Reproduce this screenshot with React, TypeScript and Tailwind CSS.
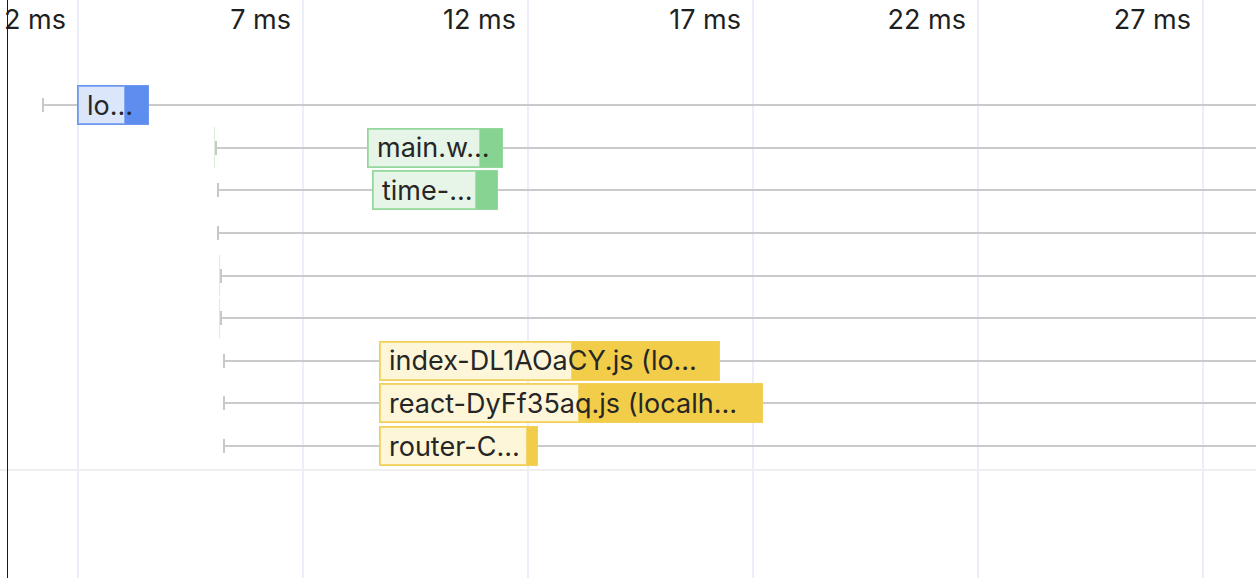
import React from 'react'

type Kind = 'blue' | 'green' | 'yellow'

interface Row {
  tick: number
  guide?: number
  bar?: { start: number; split: number; end: number; kind: Kind; label: string }
}

const ticks = ['7 ms', '12 ms', '17 ms', '22 ms', '27 ms']

const rows: Row[] = [
  { tick: 42, bar: { start: 77, split: 125, end: 149, kind: 'blue', label: 'lo…' } },
  { tick: 215, guide: 214, bar: { start: 367, split: 480, end: 503, kind: 'green', label: 'main.w…' } },
  { tick: 217, bar: { start: 372, split: 476, end: 498, kind: 'green', label: 'time-…' } },
  { tick: 217 },
  { tick: 220, guide: 219 },
  { tick: 220, guide: 219 },
  { tick: 223, bar: { start: 379, split: 572, end: 720, kind: 'yellow', label: 'index-DL1AOaCY.js (lo…' } },
  { tick: 223, bar: { start: 379, split: 579, end: 763, kind: 'yellow', label: 'react-DyFf35aq.js (localh…' } },
  { tick: 223, bar: { start: 379, split: 527, end: 538, kind: 'yellow', label: 'router-C…' } },
]

const barStyles: Record<Kind, { outer: string; inner: string }> = {
  blue: { outer: 'bg-[#5c8def] border-[#6c98f0]', inner: 'bg-[#dce6fa] border-[#86a9f2]' },
  green: { outer: 'bg-[#87d392] border-[#93d79c]', inner: 'bg-[#e6f5e7] border-[#a6deac]' },
  yellow: { outer: 'bg-[#f2cd4a] border-[#f2d05a]', inner: 'bg-[#fdf6d9] border-[#f4d76f]' },
}

function WaterfallRow({ row }: { row: Row }) {
  const bar = row.bar
  const s = bar ? barStyles[bar.kind] : null
  return (
    <div className="relative flex h-[42.625px] items-center" style={{ paddingLeft: row.tick }}>
      {row.guide !== undefined && (
        <div className="absolute top-[1px] bottom-[1px] w-px bg-[#d8f0da]" style={{ left: row.guide }} />
      )}
      {/* start tick + request line */}
      <div className="h-[14px] w-[2px] shrink-0 bg-[#c8c8ca]" />
      <div className="h-[2px] flex-1 bg-[#cacacd]" />

      {bar && s && (
        <div
          className={`absolute top-1/2 flex h-[40px] -translate-y-1/2 border ${s.outer}`}
          style={{ left: bar.start, width: bar.end - bar.start }}
        >
          <div className={`h-full shrink-0 border ${s.inner}`} style={{ width: bar.split - bar.start - 1 }} />
          <span className="absolute inset-0 flex items-center whitespace-nowrap pl-[9px] text-[27px] leading-none text-[#262626]">
            {bar.label}
          </span>
        </div>
      )}
    </div>
  )
}

export default function App() {
  return (
    <div className="relative h-[578px] w-[1256px] overflow-hidden bg-white font-['Inter','Liberation_Sans',sans-serif] text-[#1f1f1f]">
      {/* time grid behind the rows */}
      <div className="absolute inset-0 flex text-[27px] leading-[28px]">
        <div className="h-full w-[79px] shrink-0 border-r-2 border-[#e9eef9] pr-[11px] pt-[6px] text-right">2 ms</div>
        {ticks.map((t) => (
          <div key={t} className="h-full w-[225px] shrink-0 border-r-2 border-[#e9eef9] pr-[11px] pt-[6px] text-right">
            {t}
          </div>
        ))}
      </div>

      <div className="relative pt-[83.7px]">
        {rows.map((r, i) => (
          <WaterfallRow key={i} row={r} />
        ))}
        <div className="mt-[2px] h-[2px] bg-[#efefef]" />
      </div>

      {/* cursor line */}
      <div className="absolute left-[7px] top-0 bottom-0 z-10 w-px bg-[#1a1a1a]" />
    </div>
  )
}
